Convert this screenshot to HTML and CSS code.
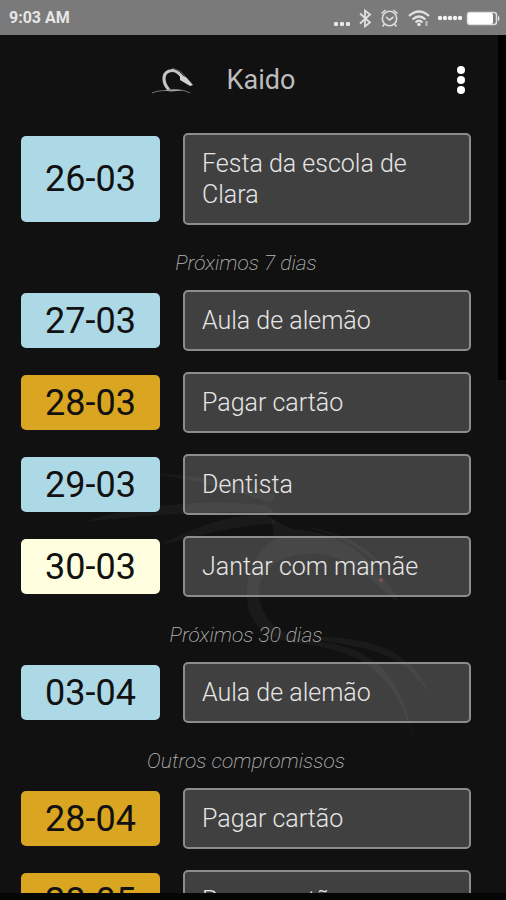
FILE: index.html
```
<!DOCTYPE html>
<html lang="pt-BR">
<head>
    <title>Kaido</title>
    <meta charset="UTF-8">
    <meta name="viewport" content="width=device-width, initial-scale=1">
    <link rel="stylesheet" href="styles.css">
</head>
<body>
    <div class="statusbar">
        <span class="clock">9:03 AM</span>
        <svg class="status-icons" width="170" height="34" viewBox="0 0 170 34" aria-hidden="true">
            <g fill="#e6e6e6">
                <rect x="0" y="21" width="4" height="4" rx="1"/>
                <rect x="6" y="21" width="4" height="4" rx="1"/>
                <rect x="12" y="21" width="4" height="4" rx="1"/>
            </g>
            <path d="M26 12.500l10 9-5 4V9.500l5 4-10 9" fill="none" stroke="#e0e0e0" stroke-width="1.800"/>
            <g fill="none" stroke="#dcdcdc" stroke-width="1.600">
                <circle cx="55.500" cy="17.500" r="7.200"/>
                <path d="M52 16l3.500 3 4-3M47.500 12.500l4-3.500M63.500 12.500l-4-3.500M50.500 23l-2 2.500M60.500 23l2 2.500"/>
            </g>
            <g fill="none" stroke="#e0e0e0" stroke-width="2.200">
                <path d="M75 15q10-9 20 0M78.500 18.500q6.500-6 13 0M81.500 21.500q3.500-3.500 7 0"/>
                <path d="M92.500 20v5" stroke="#bdbdbd"/>
            </g>
            <circle cx="85" cy="23.500" r="1.800" fill="#e6e6e6"/>
            <g fill="#f2f2f2">
                <circle cx="106" cy="17" r="2.200"/>
                <circle cx="111" cy="17" r="2.200"/>
                <circle cx="116" cy="17" r="2.200"/>
                <circle cx="121" cy="17" r="2.200"/>
                <circle cx="126" cy="17" r="2.200"/>
            </g>
            <rect x="133.500" y="11.500" width="29" height="12" rx="2.500" fill="none" stroke="#dedede" stroke-width="1.500"/>
            <rect x="134" y="12" width="25" height="11" rx="2" fill="#fff"/>
            <path d="M164 14.500q3 3 0 6z" fill="#e6e6e6"/>
        </svg>
    </div>

    <div class="screen">
        <svg class="watermark" width="360" height="280" viewBox="0 0 360 280" aria-hidden="true">
            <g fill="#fff" fill-opacity=".04">
                <path d="M0 57C40 42 90 39 130 37L182 40L190 48C140 45 60 50 0 57z"/>
                <path d="M64 8C110 10 160 18 190 30L186 38C150 26 110 14 64 8z"/>
                <path d="M76 80C115 58 150 49 182 50L192 58C150 61 115 70 76 80z"/>
                <path d="M162 128C162 104 172 86 190 74L186 54L208 64C256 66 282 91 300 116C315 134 314 137 310 135C290 120 275 97 237 89C197 86 173 103 174 130C178 157 194 169 223 176C286 180 316 204 330 280C315 221 289 187 219 179C179 176 161 157 162 128z"/>
                <path d="M220 171C285 172 327 183 344 230C326 195 294 184 244 177z"/>
                <path d="M220 62C262 68 288 85 302 108C282 87 260 72 220 62z"/>
            </g>
            <circle cx="296" cy="115" r="2" fill="#a33" fill-opacity=".5"/>
        </svg>

        <div class="scrollbar"></div>

        <header class="header">
            <div class="brand">
                <svg width="42" height="28" viewBox="0 0 42 28" aria-hidden="true">
                    <path d="M17 24C9 15 11 5 20 4.500c6-.5 8 5 13 9" fill="none" stroke="#c4c4c4" stroke-width="3.200"/>
                    <path d="M28 9l6 2 7 8-3 1-10-6z" fill="#d0d0d0"/>
                    <path d="M20 2l8 3 5 5" fill="none" stroke="#555" stroke-width="1"/>
                    <path d="M0 27c7-3 12-2 18-3 7-1 14 0 20 3" fill="none" stroke="#777" stroke-width="1"/>
                    <path d="M12 24.500q9-2 19 0l-12 1z" fill="#a0a0a0"/>
                </svg>
                <h1>Kaido</h1>
            </div>
            <button class="menu" type="button" aria-label="Menu">
                <svg width="10" height="28" viewBox="0 0 10 28" fill="#fff">
                    <circle cx="5" cy="4" r="4"/>
                    <circle cx="5" cy="14" r="4"/>
                    <circle cx="5" cy="24" r="4"/>
                </svg>
            </button>
        </header>

        <main class="agenda">
            <div class="event">
                <button class="date blue" type="button">26-03</button>
                <p class="title">Festa da escola de Clara</p>
            </div>

            <h2>Próximos 7 dias</h2>
            <div class="event">
                <button class="date blue" type="button">27-03</button>
                <p class="title">Aula de alemão</p>
            </div>
            <div class="event">
                <button class="date gold" type="button">28-03</button>
                <p class="title">Pagar cartão</p>
            </div>
            <div class="event">
                <button class="date blue" type="button">29-03</button>
                <p class="title">Dentista</p>
            </div>
            <div class="event">
                <button class="date cream" type="button">30-03</button>
                <p class="title">Jantar com mamãe</p>
            </div>

            <h2>Próximos 30 dias</h2>
            <div class="event">
                <button class="date blue" type="button">03-04</button>
                <p class="title">Aula de alemão</p>
            </div>

            <h2>Outros compromissos</h2>
            <div class="event">
                <button class="date gold" type="button">28-04</button>
                <p class="title">Pagar cartão</p>
            </div>
            <div class="event">
                <button class="date gold" type="button">28-05</button>
                <p class="title">Pagar cartão</p>
            </div>
        </main>
    </div>
</body>
</html>
```
FILE: styles.css
```
* {
    box-sizing: border-box;
}

body {
    display: flex;
    flex-direction: column;
    height: 100vh;
    margin: 0;
    padding-bottom: 7px;
    background: #060606;
    color: #e6e6e6;
    font-family: Roboto, "Liberation Sans", sans-serif;
    overflow: hidden;
}

.statusbar {
    display: flex;
    flex: none;
    align-items: center;
    justify-content: space-between;
    height: 35px;
    padding: 0 2px 0 9px;
    background: #7a7a7a;
}

.clock {
    font-size: 16px;
    font-weight: 700;
}

.screen {
    position: relative;
    flex: 1;
    min-height: 0;
    background: #111;
    overflow: hidden;
}

/* swan drawing behind the list */
.watermark {
    position: absolute;
    top: 430px;
    left: 50%;
    margin-left: -168px;
}

.scrollbar {
    position: absolute;
    top: 0;
    right: 0;
    width: 8px;
    height: 345px;
    background: #000;
}

.header {
    position: relative;
    display: flex;
    align-items: center;
    height: 90px;
    padding: 0 40px 0 21px;
}

.brand {
    display: flex;
    flex: 1;
    align-items: center;
    justify-content: center;
    gap: 33px;
    padding-right: 30px;
}

h1 {
    margin: 0;
    color: #bdbdbd;
    font-size: 27px;
    font-weight: 400;
}

.menu {
    display: flex;
    padding: 0;
    border: 0;
    background: none;
}

.agenda {
    position: relative;
    padding: 8px 35px 0 21px;
}

.event {
    display: flex;
    gap: 23px;
    margin-bottom: 21px;
}

.date {
    flex: none;
    width: 139px;
    margin: 3px 0;
    padding: 0;
    border: 0;
    border-radius: 5px;
    color: #111;
    font-family: inherit;
    font-size: 36px;
    font-weight: 400;
}

.blue {
    background: #add8e6;
}

.gold {
    background: #daa520;
}

.cream {
    background: #ffffe0;
}

.title {
    flex: 1;
    margin: 0;
    padding: 13px 17px;
    border: 2px solid #8c8c8c;
    border-radius: 5px;
    background: rgba(255, 255, 255, .2);
    font-size: 25px;
    font-weight: 300;
    line-height: 31px;
}

h2 {
    margin: 0;
    height: 44px;
    color: #b5b5b5;
    font-size: 21px;
    font-style: italic;
    font-weight: 200;
    line-height: 35px;
    text-align: center;
}
```
